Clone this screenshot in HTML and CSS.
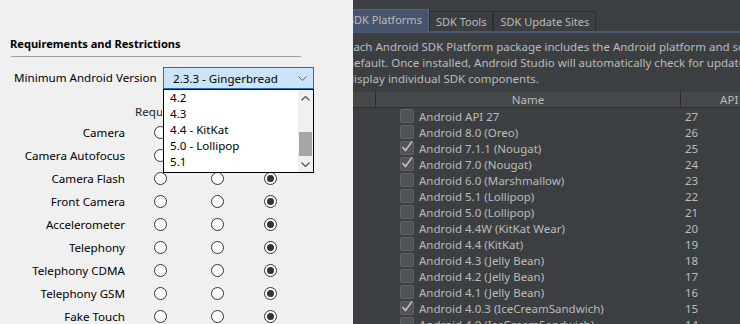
FILE: index.html
```html
<!doctype html>
<html lang="en">
<head>
	<meta charset="UTF-8">
	<title>Requirements and SDK Platforms</title>
	<link rel="stylesheet" href="styles.css">
</head>
<body>
	<div class="screen">
		<section class="dialog">
			<h2 class="title">Requirements and Restrictions</h2>
			<div class="rule"></div>
			<div class="version">
				<span class="version-label">Minimum Android Version</span>
				<div class="combo">
					<div class="combo-box">
						<span>2.3.3 - Gingerbread</span>
						<svg width="9" height="5" viewBox="0 0 9 5"><polyline points="0.5,0.5 4.5,4.5 8.5,0.5" fill="none" stroke="#606060"/></svg>
					</div>
					<div class="combo-list">
						<ul>
							<li>4.2</li>
							<li>4.3</li>
							<li>4.4 - KitKat</li>
							<li>5.0 - Lollipop</li>
							<li>5.1</li>
						</ul>
						<div class="scroll">
							<div class="scroll-btn"><svg width="9" height="5" viewBox="0 0 9 5"><polyline points="0.5,4.5 4.5,0.5 8.5,4.5" fill="none" stroke="#606060" stroke-width="1.4"/></svg></div>
							<div class="scroll-track"><div class="scroll-thumb"></div></div>
							<div class="scroll-btn"><svg width="9" height="5" viewBox="0 0 9 5"><polyline points="0.5,0.5 4.5,4.5 8.5,0.5" fill="none" stroke="#606060" stroke-width="1.4"/></svg></div>
						</div>
					</div>
				</div>
			</div>
			<div class="features">
				<span></span><span class="col-head">Required</span><span></span><span></span>
				<span class="feat-name">Camera</span><i class="radio"></i><i class="radio"></i><i class="radio on"></i>
				<span class="feat-name">Camera Autofocus</span><i class="radio"></i><i class="radio"></i><i class="radio on"></i>
				<span class="feat-name">Camera Flash</span><i class="radio"></i><i class="radio"></i><i class="radio on"></i>
				<span class="feat-name">Front Camera</span><i class="radio"></i><i class="radio"></i><i class="radio on"></i>
				<span class="feat-name">Accelerometer</span><i class="radio"></i><i class="radio"></i><i class="radio on"></i>
				<span class="feat-name">Telephony</span><i class="radio"></i><i class="radio"></i><i class="radio on"></i>
				<span class="feat-name">Telephony CDMA</span><i class="radio"></i><i class="radio"></i><i class="radio on"></i>
				<span class="feat-name">Telephony GSM</span><i class="radio"></i><i class="radio"></i><i class="radio on"></i>
				<span class="feat-name">Fake Touch</span><i class="radio"></i><i class="radio"></i><i class="radio on"></i>
			</div>
		</section>
		<section class="sdk">
			<div class="sdk-inner">
				<div class="tabs">
					<span class="tab active">SDK Platforms</span>
					<span class="tab">SDK Tools</span>
					<span class="tab">SDK Update Sites</span>
				</div>
				<p class="desc">Each Android SDK Platform package includes the Android platform and sources pertaining to an API level by<br>default. Once installed, Android Studio will automatically check for updates. Check "show package details" to<br>display individual SDK components.</p>
				<div class="table-head"><span></span><span>Name</span><span>API Level</span></div>
				<div class="row"><span></span><span class="name"><i class="check"></i>Android API 27</span><span class="api">27</span></div>
				<div class="row"><span></span><span class="name"><i class="check"></i>Android 8.0 (Oreo)</span><span class="api">26</span></div>
				<div class="row"><span></span><span class="name"><i class="check"><svg width="14" height="14" viewBox="0 0 14 14"><polyline points="2.5,7 5.5,10.5 12,1.5" fill="none" stroke="#c4c4c4" stroke-width="1.5"/></svg></i>Android 7.1.1 (Nougat)</span><span class="api">25</span></div>
				<div class="row"><span></span><span class="name"><i class="check"><svg width="14" height="14" viewBox="0 0 14 14"><polyline points="2.5,7 5.5,10.5 12,1.5" fill="none" stroke="#c4c4c4" stroke-width="1.5"/></svg></i>Android 7.0 (Nougat)</span><span class="api">24</span></div>
				<div class="row"><span></span><span class="name"><i class="check"></i>Android 6.0 (Marshmallow)</span><span class="api">23</span></div>
				<div class="row"><span></span><span class="name"><i class="check"></i>Android 5.1 (Lollipop)</span><span class="api">22</span></div>
				<div class="row"><span></span><span class="name"><i class="check"></i>Android 5.0 (Lollipop)</span><span class="api">21</span></div>
				<div class="row"><span></span><span class="name"><i class="check"></i>Android 4.4W (KitKat Wear)</span><span class="api">20</span></div>
				<div class="row"><span></span><span class="name"><i class="check"></i>Android 4.4 (KitKat)</span><span class="api">19</span></div>
				<div class="row"><span></span><span class="name"><i class="check"></i>Android 4.3 (Jelly Bean)</span><span class="api">18</span></div>
				<div class="row"><span></span><span class="name"><i class="check"></i>Android 4.2 (Jelly Bean)</span><span class="api">17</span></div>
				<div class="row"><span></span><span class="name"><i class="check"></i>Android 4.1 (Jelly Bean)</span><span class="api">16</span></div>
				<div class="row"><span></span><span class="name"><i class="check"><svg width="14" height="14" viewBox="0 0 14 14"><polyline points="2.5,7 5.5,10.5 12,1.5" fill="none" stroke="#c4c4c4" stroke-width="1.5"/></svg></i>Android 4.0.3 (IceCreamSandwich)</span><span class="api">15</span></div>
				<div class="row"><span></span><span class="name"><i class="check"></i>Android 4.0 (IceCreamSandwich)</span><span class="api">14</span></div>
			</div>
		</section>
	</div>
</body>
</html>
```

FILE: styles.css
```css
*{
	margin: 0;
	padding: 0;
	box-sizing: border-box;
}
ul,li{
	list-style: none;
}
body{
	width: 740px;
	height: 324px;
	overflow: hidden;
	font-family: "Noto Sans", "Open Sans", "Liberation Sans", sans-serif;
	font-size: 11.6px;
}
.screen{
	display: flex;
	height: 324px;
}
/* left dialog */
.dialog{
	width: 353px;
	flex-shrink: 0;
	background: #f0f0f0;
	color: #000;
}
.title{
	font-size: 11.1px;
	font-weight: bold;
	line-height: 16px;
	margin: 36px 0 0 10px;
}
.rule{
	width: 290px;
	height: 1px;
	background: #a0a0a0;
	margin: 4px 0 0 11px;
}
.version{
	display: flex;
	align-items: center;
	height: 22px;
	margin: 10px 0 0 14px;
}
.version-label{
	width: 149px;
	line-height: 16px;
}
.combo{
	position: relative;
	width: 151px;
	height: 22px;
}
.combo-box{
	display: flex;
	align-items: center;
	justify-content: space-between;
	height: 22px;
	padding: 0 6px 0 9px;
	border: 1px solid #0078d7;
	background: #cce4f7;
}
.combo-list{
	position: absolute;
	left: 0;
	top: 22px;
	z-index: 2;
	display: flex;
	width: 151px;
	height: 84px;
	background: #fff;
	border: 1px solid #000;
}
.combo-list ul{
	flex: 1;
}
.combo-list li{
	height: 16px;
	line-height: 16px;
	padding-left: 6px;
}
.scroll{
	width: 15px;
	display: flex;
	flex-direction: column;
	background: #f0f0f0;
}
.scroll-btn{
	height: 16px;
	display: flex;
	align-items: center;
	justify-content: center;
}
.scroll-track{
	flex: 1;
	display: flex;
	flex-direction: column;
	justify-content: flex-end;
}
.scroll-thumb{
	height: 24px;
	margin: 0 1px;
	background: #a6a6a6;
}
.features{
	display: grid;
	grid-template-columns: 125px 57px 53px 53px;
	grid-template-rows: 20px;
	grid-auto-rows: 23px;
	align-items: center;
	margin-top: 12px;
}
.feat-name{
	text-align: right;
	white-space: nowrap;
}
/* the header is partly covered by the open list */
.col-head{
	width: 27px;
	margin-left: 10px;
	overflow: hidden;
	white-space: nowrap;
	color: #222;
}
.radio{
	display: flex;
	align-items: center;
	justify-content: center;
	width: 13px;
	height: 13px;
	margin-left: 29px;
	border: 1px solid #333;
	border-radius: 50%;
	background: #fff;
}
.radio.on::after{
	content: "";
	width: 7px;
	height: 7px;
	border-radius: 50%;
	background: #333;
}
/* right sdk manager */
.sdk{
	flex: 1;
	overflow: hidden;
	background: #3c3f41;
	color: #bbb;
	font-size: 11.5px;
}
.sdk-inner{
	width: 480px;
	margin-left: -12px;
}
.tabs{
	display: flex;
	align-items: flex-end;
	height: 33px;
	border-bottom: 2px solid #4a5876;
	font-size: 11px;
}
.tab{
	height: 20px;
	line-height: 19px;
	padding: 0 6px;
	border: 1px solid #2c2e30;
	border-bottom: none;
	white-space: nowrap;
}
.tab.active{
	height: 22px;
	line-height: 20px;
	background: #47546c;
	border-color: #55637e;
}
.desc{
	margin-top: 6px;
	padding-left: 6px;
	line-height: 16px;
	white-space: nowrap;
}
.table-head,.row{
	display: grid;
	grid-template-columns: 35px 305px 128px;
	height: 16px;
}
.table-head{
	margin-top: 5px;
	background: #45494a;
	border-bottom: 1px solid #2f3133;
}
.table-head span{
	line-height: 15px;
	text-align: center;
	white-space: nowrap;
	border-right: 1px solid #2b2b2b;
}
.row{
	align-items: center;
	white-space: nowrap;
}
.name{
	display: flex;
	align-items: center;
	padding-left: 24px;
}
.check{
	position: relative;
	width: 14px;
	height: 14px;
	margin-right: 5px;
	border: 1px solid #5f6264;
	border-radius: 2px;
	background: #515456;
}
.check svg{
	position: absolute;
	left: -1px;
	top: -2px;
}
.api{
	padding-left: 4px;
}
```
